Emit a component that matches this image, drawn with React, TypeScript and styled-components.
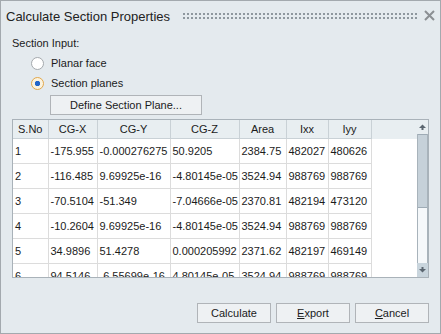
import styled, { createGlobalStyle } from "styled-components";

const rows = [
	["1", "-175.955", "-0.000276275", "50.9205", "2384.75", "482027", "480626"],
	["2", "-116.485", "9.69925e-16", "-4.80145e-05", "3524.94", "988769", "988769"],
	["3", "-70.5104", "-51.349", "-7.04666e-05", "2370.81", "482194", "473120"],
	["4", "-10.2604", "9.69925e-16", "-4.80145e-05", "3524.94", "988769", "988769"],
	["5", "34.9896", "51.4278", "0.000205992", "2371.62", "482197", "469149"],
	["6", "94.5146", "-6.55699e-16", "4.80145e-05", "3524.94", "988769", "988769"],
];
const headers = ["S.No", "CG-X", "CG-Y", "CG-Z", "Area", "Ixx", "Iyy"];
const widths = [35, 49, 73, 69, 47, 42, 43];

const Arrow = ({ down }: { down?: boolean }) => (
	<svg width="7" height="6" viewBox="0 0 7 6" style={{ transform: down ? "rotate(180deg)" : undefined }}>
		<path d="M0 4L3.5 0.5L7 4Z" fill="#5b6670" />
		<rect x="2.5" y="3.5" width="2" height="2.5" fill="#5b6670" />
	</svg>
);

export default function App() {
	return (
		<>
			<GlobalStyle />
			<Dialog>
				<TitleBar>
					<Title>Calculate Section Properties</Title>
					<Grip />
					<svg width="11" height="11" viewBox="0 0 11 11">
						<path d="M1 1L10 10M10 1L1 10" stroke="#8b8f93" strokeWidth="2" />
					</svg>
				</TitleBar>
				<Body>
					<Label>Section Input:</Label>
					<RadioRow>
						<Radio />
						Planar face
					</RadioRow>
					<RadioRow>
						<Radio checked />
						Section planes
					</RadioRow>
					<DefineButton>Define Section Plane...</DefineButton>
					<TableFrame>
						<Viewport>
							<Grid>
								<colgroup>
									{widths.map((w, i) => (
										<col key={i} style={{ width: w }} />
									))}
									<col />
								</colgroup>
								<thead>
									<tr>
										{headers.map((h) => (
											<HeadCell key={h}>{h}</HeadCell>
										))}
										<HeadFiller />
									</tr>
								</thead>
								<tbody>
									{rows.map((r) => (
										<tr key={r[0]}>
											{r.map((v, i) => (
												<Cell key={i}>{v}</Cell>
											))}
											<Filler />
										</tr>
									))}
								</tbody>
							</Grid>
						</Viewport>
						<ScrollBar>
							<ScrollUp>
								<Arrow />
							</ScrollUp>
							<Track>
								<Thumb />
							</Track>
							<ScrollDown>
								<Arrow down />
							</ScrollDown>
						</ScrollBar>
					</TableFrame>
					<Footer>
						<ActionButton>Calculate</ActionButton>
						<ActionButton>
							<u>E</u>xport
						</ActionButton>
						<ActionButton>
							<u>C</u>ancel
						</ActionButton>
					</Footer>
				</Body>
			</Dialog>
		</>
	);
}

const GlobalStyle = createGlobalStyle`
	body {
		margin: 0;
		font-family: "Liberation Sans", Arial, sans-serif;
		font-size: 11px;
		color: #1b1b1b;
	}
`;

const Dialog = styled.div`
	width: 441px;
	height: 334px;
	box-sizing: border-box;
	border: 1px solid #a3a9ae;
	background: #e4eaee;
	display: flex;
	flex-direction: column;
`;

const TitleBar = styled.div`
	height: 29px;
	display: flex;
	align-items: center;
	padding: 0 5px 0 5px;
`;

const Title = styled.div`
	font-size: 13px;
	color: #222;
	padding-top: 2px;
`;

const Grip = styled.div`
	flex: 1;
	height: 8px;
	margin: 0 7px 0 12px;
	background-image: radial-gradient(circle, #8e979e 0.8px, transparent 1.1px);
	background-size: 4px 4px;
`;

const Body = styled.div`
	flex: 1;
	display: flex;
	flex-direction: column;
	padding: 0 11px;
`;

const Label = styled.div`
	margin-top: 7px;
	line-height: 13px;
`;

const RadioRow = styled.div`
	display: flex;
	align-items: center;
	height: 20px;
	padding-left: 19px;
	margin-top: 3px;
	&:nth-of-type(3) {
		margin-top: 0;
	}
`;

const Radio = styled.span<{ checked?: boolean }>`
	width: 11px;
	height: 11px;
	border-radius: 50%;
	margin-right: 7px;
	border: 1px solid ${({ checked }) => (checked ? "#e3a84a" : "#a4a9ad")};
	background: ${({ checked }) =>
		checked ? "radial-gradient(circle, #2466c9 2.4px, #fbf3df 3px)" : "#fff"};
`;

const DefineButton = styled.div`
	margin: 2px 0 0 38px;
	width: 152px;
	height: 20px;
	box-sizing: border-box;
	border: 1px solid #b0b4b8;
	background: #eef1f3;
	display: flex;
	align-items: center;
	justify-content: center;
`;

const TableFrame = styled.div`
	margin-top: 4px;
	height: 159px;
	box-sizing: border-box;
	border: 1px solid #a9b2b9;
	background: #fff;
	display: flex;
	overflow: hidden;
`;

const Viewport = styled.div`
	flex: 1;
	overflow: hidden;
`;

const Grid = styled.table`
	border-collapse: collapse;
	table-layout: fixed;
	width: 100%;
`;

const HeadCell = styled.th`
	height: 18px;
	padding: 0;
	font-weight: normal;
	background: #e8eef1;
	border-right: 1px solid #c9d1d6;
	border-bottom: 1px solid #c9d1d6;
	text-align: center;
	white-space: nowrap;
`;

const HeadFiller = styled.th`
	background: #e8eef1;
	border-bottom: 1px solid #e8eef1;
	padding: 0;
`;

const Cell = styled.td`
	height: 24px;
	padding: 0 0 0 2px;
	border-right: 1px solid #dcdcdc;
	border-bottom: 1px solid #dcdcdc;
	white-space: nowrap;
	overflow: hidden;
`;

const Filler = styled.td`
	padding: 0;
`;

const ScrollBar = styled.div`
	width: 11px;
	display: flex;
	flex-direction: column;
	background: #e8eef1;
`;

const ScrollUp = styled.div`
	height: 14px;
	display: flex;
	align-items: center;
	justify-content: center;
`;

const Track = styled.div`
	flex: 1;
	background: #f5f8fa;
	border-left: 1px solid #a8b3bb;
	border-right: 1px solid #a8b3bb;
`;

const Thumb = styled.div`
	height: 72px;
	background: #c6d1d9;
	border-top: 1px solid #9eabb5;
	border-bottom: 1px solid #9eabb5;
`;

const ScrollDown = styled.div`
	height: 14px;
	display: flex;
	align-items: center;
	justify-content: center;
	background: #c9d5dd;
`;

const Footer = styled.div`
	margin-top: 25px;
	display: flex;
	justify-content: flex-end;
	gap: 5px;
`;

const ActionButton = styled.div`
	width: 74px;
	height: 20px;
	box-sizing: border-box;
	border: 1px solid #b0b4b8;
	background: #eef1f3;
	display: flex;
	align-items: center;
	justify-content: center;
	u {
		text-decoration: underline;
	}
`;
